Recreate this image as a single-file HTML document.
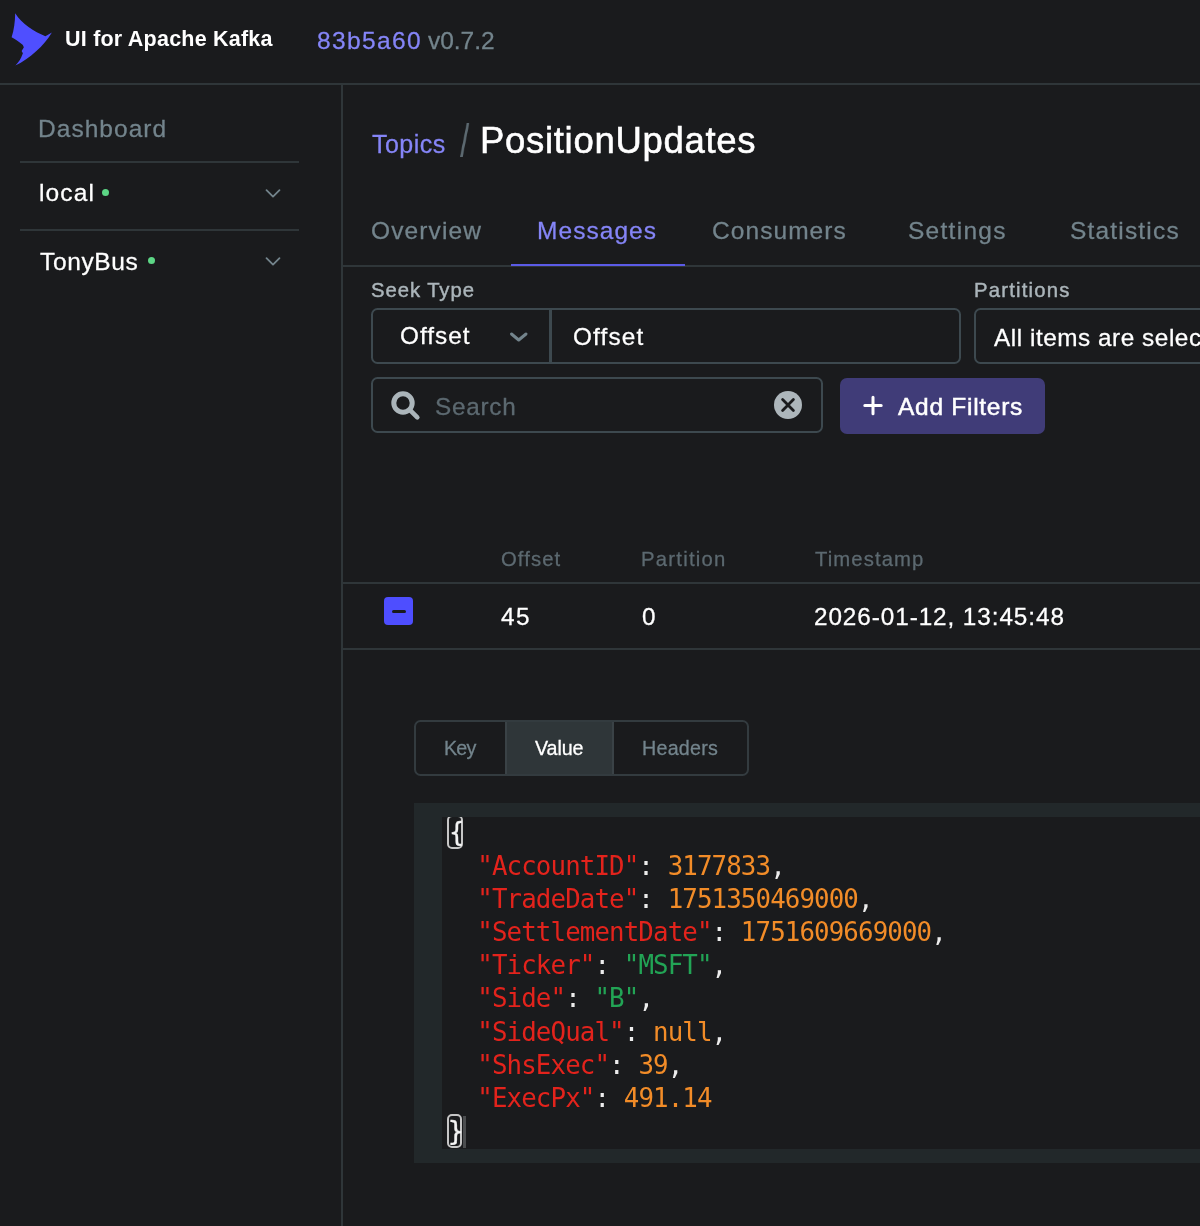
<!DOCTYPE html>
<html lang="en">
<head>
<meta charset="utf-8">
<title>UI for Apache Kafka</title>
<style>
html,body{margin:0;padding:0;}
body{width:1200px;height:1226px;overflow:hidden;background:#1a1b1d;position:relative;font-family:"Liberation Sans", sans-serif;}
.t,.cl{will-change:transform;}
.t{position:absolute;white-space:nowrap;line-height:1;font-family:"Liberation Sans", sans-serif;}
.abs{position:absolute;box-sizing:border-box;}
.box{position:absolute;box-sizing:border-box;border:2px solid #3d494f;border-radius:6.5px;}
.cl{position:absolute;left:5.6px;height:33.17px;line-height:33.17px;font-family:"DejaVu Sans Mono","Liberation Mono",monospace;font-size:25.8px;letter-spacing:-0.89px;white-space:pre;color:#e6e6e6;}
.k{color:#e3231c;}
.n{color:#f28c28;}
.s{color:#22a455;}
.p{color:#ececec;}
.b,.b2{color:#f4f4f4;-webkit-text-stroke:0.3px;display:inline-block;transform-origin:50% 50%;}
.b{transform:translate(1.0px,-1.1px) scale(0.97,1.05);}
.b2{transform:translate(0.1px,-0.6px) scale(1.04,1.05);}
</style>
</head>
<body>
<!-- header -->
<div class="abs" style="left:0;top:83px;width:1200px;height:2px;background:#2f3639"></div>
<svg class="abs" style="left:0;top:0" width="70" height="80" viewBox="0 0 70 80">
<path fill="#4f4fff" d="M15.2 13.2 C22 24 34 31.5 45.4 36.2 L51.9 32.4 C44 46 30 58 15.4 65.6 C19 61.5 21 58.5 22 55.5 L22.9 53.3 L21.6 50.9 L23.8 47.6 C23.5 46 23 45.3 22.3 44.6 C19 41.5 15 39 11.6 37.2 C14 30 15 22 15.2 13.2 Z"/>
</svg>
<!-- sidebar -->
<div class="abs" style="left:341px;top:84px;width:2px;height:1142px;background:#2f3639"></div>
<div class="abs" style="left:20px;top:161px;width:279px;height:2px;background:#2f3639"></div>
<div class="abs" style="left:20px;top:229px;width:279px;height:2px;background:#2f3639"></div>
<div class="abs" style="left:102px;top:189.25px;width:7px;height:7px;border-radius:50%;background:#5cd685"></div>
<div class="abs" style="left:147.5px;top:257.25px;width:7px;height:7px;border-radius:50%;background:#5cd685"></div>
<svg class="abs" style="left:262px;top:184.5px" width="22" height="18" viewBox="0 0 22 18"><path d="M4.5 5.2 L11 11.6 L17.5 5.2" fill="none" stroke="#73848c" stroke-width="1.8" stroke-linecap="round" stroke-linejoin="round"/></svg>
<svg class="abs" style="left:262px;top:252.5px" width="22" height="18" viewBox="0 0 22 18"><path d="M4.5 5.2 L11 11.6 L17.5 5.2" fill="none" stroke="#73848c" stroke-width="1.8" stroke-linecap="round" stroke-linejoin="round"/></svg>
<!-- tabs -->
<div class="abs" style="left:343px;top:265px;width:857px;height:2px;background:#2f3639"></div>
<div class="abs" style="left:510.5px;top:263.5px;width:174px;height:2.5px;background:#5b5be6"></div>
<!-- filters -->
<div class="box" style="left:370.5px;top:307.5px;width:180.5px;height:56.5px;border-radius:6.5px 0 0 6.5px;"></div>
<div class="box" style="left:550px;top:307.5px;width:410.5px;height:56.5px;border-radius:0 6.5px 6.5px 0;"></div>
<svg class="abs" style="left:506px;top:326px" width="26" height="22" viewBox="0 0 26 22"><path d="M5.5 8 L12.7 14 L20 8" fill="none" stroke="#73848c" stroke-width="3" stroke-linecap="round" stroke-linejoin="round"/></svg>
<div class="box" style="left:973.5px;top:307.5px;width:260px;height:56.5px;"></div>
<div class="box" style="left:370.5px;top:377.2px;width:452px;height:56.3px;"></div>
<svg class="abs" style="left:388px;top:387.8px" width="36" height="36" viewBox="0 0 36 36"><circle cx="15" cy="15" r="9.2" fill="none" stroke="#abb5ba" stroke-width="5"/><path d="M22.3 22.3 L29.3 29.3" stroke="#abb5ba" stroke-width="4.6" stroke-linecap="round"/></svg>
<svg class="abs" style="left:772.5px;top:390.1px" width="30" height="30" viewBox="0 0 30 30"><circle cx="15" cy="15" r="14" fill="#adb6bb"/><path d="M9.6 9.6 L20.4 20.4 M20.4 9.6 L9.6 20.4" stroke="#1a1b1d" stroke-width="2.8" stroke-linecap="round"/></svg>
<div class="abs" style="left:839.5px;top:377.5px;width:205px;height:56px;border-radius:7px;background:#403c78"></div>
<svg class="abs" style="left:860px;top:392px" width="26" height="26" viewBox="0 0 26 26"><path d="M13 5.2 V21.8 M4.8 13.5 H21.2" stroke="#fff" stroke-width="3" stroke-linecap="round"/></svg>
<!-- table -->
<div class="abs" style="left:343px;top:582px;width:857px;height:2px;background:#2f3639"></div>
<div class="abs" style="left:343px;top:648px;width:857px;height:2px;background:#2f3639"></div>
<div class="abs" style="left:384.2px;top:597.1px;width:28.5px;height:28.3px;border-radius:4px;background:#4e4eff"></div>
<div class="abs" style="left:391.6px;top:609.7px;width:14px;height:3.5px;border-radius:2px;background:#1a1b1d"></div>
<!-- kv tabs -->
<div class="box" style="left:414px;top:719.5px;width:334.5px;height:56.5px;border-color:#333b3f;"></div>
<div class="abs" style="left:505px;top:721.5px;width:108.7px;height:52.5px;background:#2f3639"></div>
<div class="abs" style="left:612.2px;top:721.5px;width:1.5px;height:52.5px;background:#3a4246"></div>
<div class="abs" style="left:505px;top:721.5px;width:1.5px;height:52.5px;background:#3a4246"></div>
<!-- editor -->
<div class="abs" style="left:414px;top:803px;width:786px;height:359.5px;background:#22282a"></div>
<div class="abs" style="left:442px;top:817px;width:758px;height:332px;background:#1a1b1d;overflow:hidden">
<div class="abs bx" style="left:5.25px;top:-1.7px;width:15.25px;height:33.45px;border:2px solid #c6c6c6;border-radius:5px"></div>
<div class="abs bx" style="left:5.25px;top:296.5px;width:15.15px;height:34.4px;border:2px solid #c6c6c6;border-radius:5px"></div>
<div class="abs bx" style="left:21.3px;top:298.9px;width:2.7px;height:32.6px;background:#4b4d4f"></div>
<div class="cl" style="top:-0.50px"><span class="b">{</span></div>
<div class="cl" style="top:32.67px"><span class="p">  </span><span class="k">&quot;AccountID&quot;</span><span class="p">: </span><span class="n">3177833</span><span class="p">,</span></div>
<div class="cl" style="top:65.84px"><span class="p">  </span><span class="k">&quot;TradeDate&quot;</span><span class="p">: </span><span class="n">1751350469000</span><span class="p">,</span></div>
<div class="cl" style="top:99.01px"><span class="p">  </span><span class="k">&quot;SettlementDate&quot;</span><span class="p">: </span><span class="n">1751609669000</span><span class="p">,</span></div>
<div class="cl" style="top:132.18px"><span class="p">  </span><span class="k">&quot;Ticker&quot;</span><span class="p">: </span><span class="s">&quot;MSFT&quot;</span><span class="p">,</span></div>
<div class="cl" style="top:165.35px"><span class="p">  </span><span class="k">&quot;Side&quot;</span><span class="p">: </span><span class="s">&quot;B&quot;</span><span class="p">,</span></div>
<div class="cl" style="top:198.52px"><span class="p">  </span><span class="k">&quot;SideQual&quot;</span><span class="p">: </span><span class="n">null</span><span class="p">,</span></div>
<div class="cl" style="top:231.69px"><span class="p">  </span><span class="k">&quot;ShsExec&quot;</span><span class="p">: </span><span class="n">39</span><span class="p">,</span></div>
<div class="cl" style="top:264.86px"><span class="p">  </span><span class="k">&quot;ExecPx&quot;</span><span class="p">: </span><span class="n">491.14</span></div>
<div class="cl" style="top:298.03px"><span class="b2">}</span></div>
</div>
<!-- text -->
<span class="t" style="left:64.70px;top:29.00px;font-size:21.5px;color:#ffffff;letter-spacing:0.220px;font-weight:700;">UI for Apache Kafka</span>
<span class="t" style="left:317.30px;top:28.50px;font-size:24.5px;color:#8585f7;letter-spacing:1.391px;-webkit-text-stroke:0.28px;">83b5a60</span>
<span class="t" style="left:428.00px;top:28.50px;font-size:24.5px;color:#73848c;letter-spacing:-0.023px;-webkit-text-stroke:0.28px;">v0.7.2</span>
<span class="t" style="left:37.50px;top:117.00px;font-size:24.5px;color:#73848c;letter-spacing:1.034px;-webkit-text-stroke:0.28px;">Dashboard</span>
<span class="t" style="left:38.50px;top:181.00px;font-size:24.5px;color:#ffffff;letter-spacing:1.139px;-webkit-text-stroke:0.28px;">local</span>
<span class="t" style="left:39.50px;top:249.50px;font-size:24.5px;color:#ffffff;letter-spacing:0.630px;-webkit-text-stroke:0.28px;">TonyBus</span>
<span class="t" style="left:372.25px;top:131.50px;font-size:25px;color:#8585f7;letter-spacing:0.478px;-webkit-text-stroke:0.28px;">Topics</span>
<span class="t" style="left:459.75px;top:117.10px;font-size:47px;color:#5c6970;letter-spacing:0.000px;transform:scaleX(0.71);transform-origin:0 0;">/</span>
<span class="t" style="left:479.50px;top:122.50px;font-size:36.5px;color:#ffffff;letter-spacing:0.696px;-webkit-text-stroke:0.55px;">PositionUpdates</span>
<span class="t" style="left:370.50px;top:218.50px;font-size:24.5px;color:#73848c;letter-spacing:1.120px;-webkit-text-stroke:0.28px;">Overview</span>
<span class="t" style="left:537.00px;top:218.50px;font-size:24.5px;color:#8585f7;letter-spacing:1.048px;-webkit-text-stroke:0.28px;">Messages</span>
<span class="t" style="left:712.00px;top:218.50px;font-size:24.5px;color:#73848c;letter-spacing:1.061px;-webkit-text-stroke:0.28px;">Consumers</span>
<span class="t" style="left:907.80px;top:218.50px;font-size:24.5px;color:#73848c;letter-spacing:1.275px;-webkit-text-stroke:0.28px;">Settings</span>
<span class="t" style="left:1069.90px;top:218.50px;font-size:24.5px;color:#73848c;letter-spacing:1.181px;-webkit-text-stroke:0.28px;">Statistics</span>
<span class="t" style="left:371.25px;top:280.00px;font-size:20.3px;color:#abb5ba;letter-spacing:0.931px;-webkit-text-stroke:0.45px;">Seek Type</span>
<span class="t" style="left:973.50px;top:280.00px;font-size:20.3px;color:#abb5ba;letter-spacing:1.205px;-webkit-text-stroke:0.45px;">Partitions</span>
<span class="t" style="left:400.25px;top:324.25px;font-size:24.3px;color:#ffffff;letter-spacing:1.026px;-webkit-text-stroke:0.28px;">Offset</span>
<span class="t" style="left:572.75px;top:325.00px;font-size:24.3px;color:#ffffff;letter-spacing:1.176px;-webkit-text-stroke:0.28px;">Offset</span>
<span class="t" style="left:993.75px;top:325.75px;font-size:24.3px;color:#ffffff;letter-spacing:0.550px;-webkit-text-stroke:0.28px;">All items are selected</span>
<span class="t" style="left:435.25px;top:395.00px;font-size:24.3px;color:#5c6970;letter-spacing:0.756px;-webkit-text-stroke:0.28px;">Search</span>
<span class="t" style="left:897.90px;top:394.90px;font-size:24.5px;color:#ffffff;letter-spacing:0.726px;-webkit-text-stroke:0.5px;">Add Filters</span>
<span class="t" style="left:500.50px;top:549.25px;font-size:20.3px;color:#5c6970;letter-spacing:1.080px;-webkit-text-stroke:0.28px;">Offset</span>
<span class="t" style="left:641.00px;top:549.25px;font-size:20.3px;color:#5c6970;letter-spacing:1.235px;-webkit-text-stroke:0.28px;">Partition</span>
<span class="t" style="left:814.80px;top:549.25px;font-size:20.3px;color:#5c6970;letter-spacing:1.092px;-webkit-text-stroke:0.28px;">Timestamp</span>
<span class="t" style="left:500.75px;top:604.50px;font-size:24.3px;color:#ffffff;letter-spacing:1.487px;-webkit-text-stroke:0.28px;">45</span>
<span class="t" style="left:642.00px;top:604.50px;font-size:24.3px;color:#ffffff;letter-spacing:0.000px;-webkit-text-stroke:0.28px;">0</span>
<span class="t" style="left:813.80px;top:604.50px;font-size:24.3px;color:#ffffff;letter-spacing:0.924px;-webkit-text-stroke:0.28px;">2026-01-12, 13:45:48</span>
<span class="t" style="left:443.80px;top:738.80px;font-size:19.7px;color:#73848c;letter-spacing:-0.840px;-webkit-text-stroke:0.28px;">Key</span>
<span class="t" style="left:535.20px;top:738.80px;font-size:19.7px;color:#ffffff;letter-spacing:-0.110px;-webkit-text-stroke:0.28px;">Value</span>
<span class="t" style="left:641.50px;top:738.80px;font-size:19.7px;color:#73848c;letter-spacing:0.238px;-webkit-text-stroke:0.28px;">Headers</span>
</body>
</html>
